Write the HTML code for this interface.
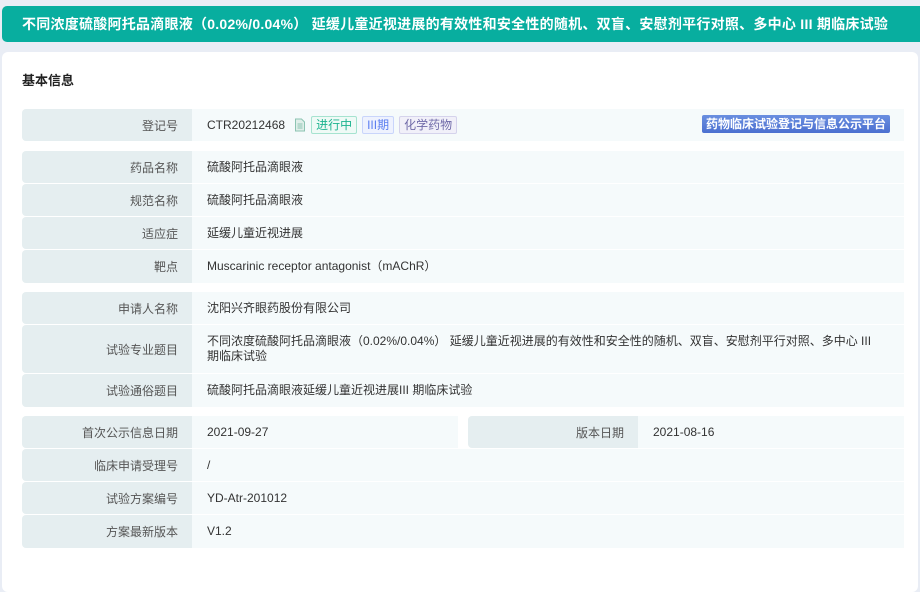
<!DOCTYPE html>
<html><head><meta charset="utf-8"><style>
*{margin:0;padding:0;box-sizing:border-box}
body{width:920px;height:562px;background:#e9edf5;font-family:"Liberation Sans","Noto Sans CJK SC",sans-serif;position:relative;overflow:hidden;font-size:12px;color:#333}
.hd{position:absolute;left:2px;top:6px;width:918px;height:36px;background:#08ae9f;border-radius:5px 0 0 5px;color:#fff;font-weight:bold;font-size:14px;line-height:36px;padding-left:20px;white-space:nowrap;letter-spacing:0.25px}
.card{position:absolute;left:2px;top:52px;width:916px;height:540px;background:#fff;border-radius:6px}
.ttl{position:absolute;left:22px;top:72px;font-size:13px;font-weight:bold;color:#222;line-height:18px}
.l{position:absolute;background:#e5eef0;color:#555;text-align:right;padding-right:14px;border-radius:4px 0 0 4px;display:flex;align-items:center;justify-content:flex-end}
.v{position:absolute;background:#f5fafb;color:#333;padding-left:15px;display:flex;align-items:center;line-height:15px}
.tag{display:inline-block;height:18px;line-height:16px;border:1px solid;border-radius:2px;padding:0 4px;margin-right:5px;font-size:12px}
.pl{position:absolute;left:702px;top:115px;width:188px;height:18px;background:linear-gradient(#6a8fe0,#4b6fd0);border-radius:2px;color:#fff;font-weight:bold;font-size:12px;line-height:18px;text-align:center}
</style></head><body>
<div class="hd">不同浓度硫酸阿托品滴眼液（0.02%/0.04%） 延缓儿童近视进展的有效性和安全性的随机、双盲、安慰剂平行对照、多中心 III 期临床试验</div>
<div class="card"></div>
<div class="ttl">基本信息</div>

<div class="l" style="left:22px;top:109px;width:170px;height:32px">登记号</div>
<div class="v" style="left:192px;top:109px;width:712px;height:32px">CTR20212468
<svg width="12" height="14" viewBox="0 0 12 14" style="margin:0 5px 0 9px"><path d="M1.5 1h6l3 3v9h-9z" fill="#dfeee9" stroke="#8cc4b2"/><path d="M3.5 6h5M3.5 8h5M3.5 10h5" stroke="#8cc4b2"/></svg>
<span class="tag" style="color:#1bb38f;border-color:#a6e3d0;background:#effaf6">进行中</span><span class="tag" style="color:#5b7ef0;border-color:#c9d5fb;background:#eef2fe">III期</span><span class="tag" style="color:#6f6aa8;border-color:#d5d3ec;background:#f1f0f9">化学药物</span></div>
<div class="pl">药物临床试验登记与信息公示平台</div>

<div class="l" style="left:22px;top:151px;width:170px;height:32px">药品名称</div>
<div class="v" style="left:192px;top:151px;width:712px;height:32px">硫酸阿托品滴眼液</div>
<div class="l" style="left:22px;top:184px;width:170px;height:32px">规范名称</div>
<div class="v" style="left:192px;top:184px;width:712px;height:32px">硫酸阿托品滴眼液</div>
<div class="l" style="left:22px;top:217px;width:170px;height:32px">适应症</div>
<div class="v" style="left:192px;top:217px;width:712px;height:32px">延缓儿童近视进展</div>
<div class="l" style="left:22px;top:250px;width:170px;height:33px">靶点</div>
<div class="v" style="left:192px;top:250px;width:712px;height:33px">Muscarinic receptor antagonist（mAChR）</div>

<div class="l" style="left:22px;top:292px;width:170px;height:32px">申请人名称</div>
<div class="v" style="left:192px;top:292px;width:712px;height:32px">沈阳兴齐眼药股份有限公司</div>
<div class="l" style="left:22px;top:325px;width:170px;height:48px">试验专业题目</div>
<div class="v" style="left:192px;top:325px;width:712px;height:48px">不同浓度硫酸阿托品滴眼液（0.02%/0.04%） 延缓儿童近视进展的有效性和安全性的随机、双盲、安慰剂平行对照、多中心 III<br>期临床试验</div>
<div class="l" style="left:22px;top:374px;width:170px;height:33px">试验通俗题目</div>
<div class="v" style="left:192px;top:374px;width:712px;height:33px">硫酸阿托品滴眼液延缓儿童近视进展III 期临床试验</div>

<div class="l" style="left:22px;top:416px;width:170px;height:32px">首次公示信息日期</div>
<div class="v" style="left:192px;top:416px;width:266px;height:32px">2021-09-27</div>
<div class="l" style="left:468px;top:416px;width:170px;height:32px">版本日期</div>
<div class="v" style="left:638px;top:416px;width:266px;height:32px">2021-08-16</div>
<div class="l" style="left:22px;top:449px;width:170px;height:32px">临床申请受理号</div>
<div class="v" style="left:192px;top:449px;width:712px;height:32px">/</div>
<div class="l" style="left:22px;top:482px;width:170px;height:32px">试验方案编号</div>
<div class="v" style="left:192px;top:482px;width:712px;height:32px">YD-Atr-201012</div>
<div class="l" style="left:22px;top:515px;width:170px;height:33px">方案最新版本</div>
<div class="v" style="left:192px;top:515px;width:712px;height:33px">V1.2</div>
</body></html>
